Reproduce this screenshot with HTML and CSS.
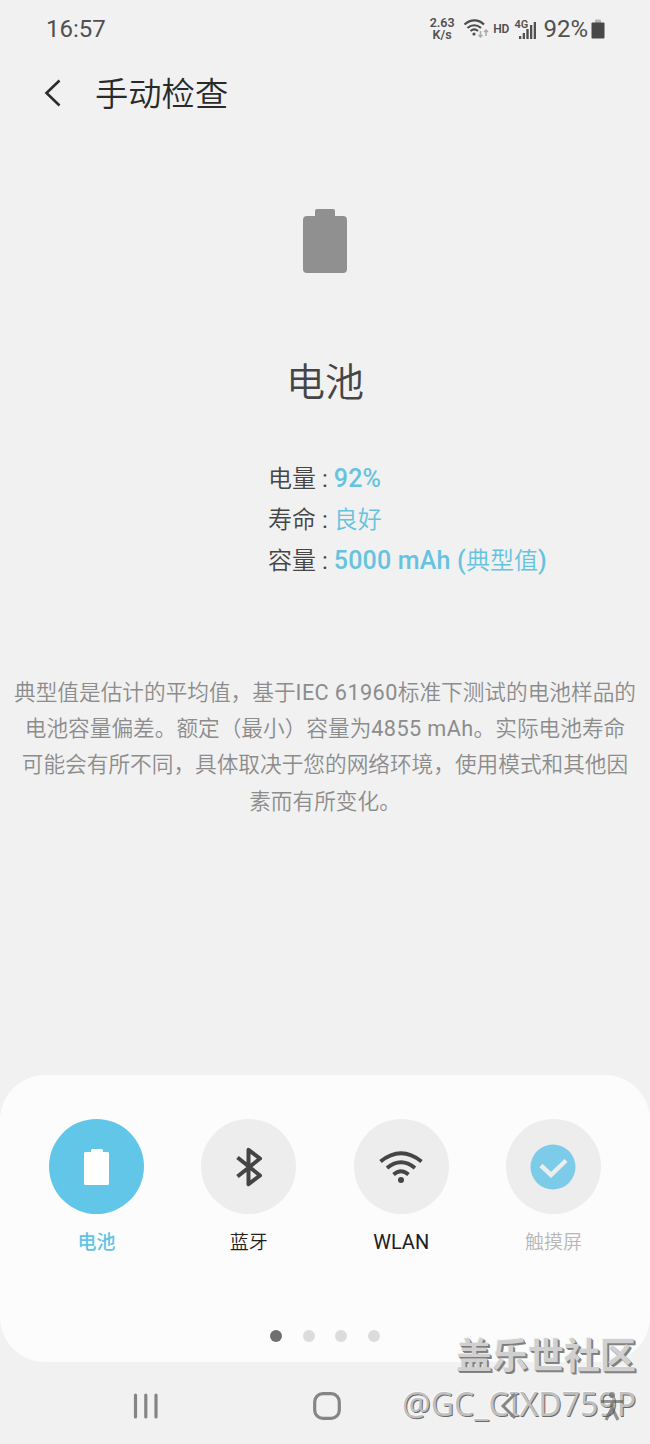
FILE: index.html
```html
<!DOCTYPE html>
<html lang="zh-CN">

<head>
    <meta charset="UTF-8">
    <meta name="viewport" content="width=device-width, initial-scale=1.0">
    <title>手动检查</title>
    <link rel="stylesheet" href="styles.css">
</head>

<body>
    <div class="screen">
        <div class="status-bar">
            <span class="time">16:57</span>
            <div class="status-icons">
                <div class="net-speed">2.63<br>K/s</div>
                <svg class="status-wifi" width="26" height="22" viewBox="0 0 26 22" fill="none">
                    <path d="M1.500 6.500C7.500 1 15.500 1 21 6.500M4.500 10c4-3.700 9.500-3.700 13.500 0M7.500 13c2.400-2 5.200-2 7.500 0" stroke="#4c4c4c" stroke-width="2.200" />
                    <circle cx="11" cy="16" r="1.600" fill="#4c4c4c" />
                    <path d="M17.500 13v6M15.500 17l2 2 2-2M23 18v-6M21 14l2-2 2 2" stroke="#ababab" stroke-width="1.500" />
                </svg>
                <span class="hd">HD</span>
                <div class="signal">
                    <span>4G</span>
                    <svg width="18" height="18" viewBox="0 0 18 18">
                        <path d="M0 15h2.300v3H0zM3.700 12H6v6H3.700zM7.300 8h2.400v10H7.300zM11 4h2.300v14H11zM14.700 1H17v17h-2.300z" fill="#505050" />
                    </svg>
                </div>
                <span class="percent">92%</span>
                <svg class="status-battery" width="14" height="20" viewBox="0 0 14 20">
                    <path d="M4 1.500Q4 .5 5 .5h4q1 0 1 1V4H4z" fill="#b5b5b5" />
                    <rect x="0.500" y="3.500" width="13" height="16" rx="1" fill="#484848" />
                </svg>
            </div>
        </div>

        <div class="header">
            <svg width="20" height="30" viewBox="0 0 20 30" fill="none">
                <path d="M16.500 2.500L3.500 15l13 12.500" stroke="#2c2c2c" stroke-width="2.600" />
            </svg>
            <h1>手动检查</h1>
        </div>

        <div class="content">
            <svg class="battery" width="44" height="64" viewBox="0 0 44 64">
                <path d="M12 7V2q0-2 2-2h16q2 0 2 2v5h8q4 0 4 4v49q0 4-4 4H4q-4 0-4-4V11q0-4 4-4z" fill="#909090" />
            </svg>
            <h2>电池</h2>
            <div class="details">
                <div>电量 : <b>92%</b></div>
                <div>寿命 : <span class="value">良好</span></div>
                <div>容量 : <b>5000 mAh (</b><span class="value">典型值</span><b>)</b></div>
            </div>
            <p class="description">
                典型值是估计的平均值，基于<span>IEC 61960</span>标准下测试的电池样品的<br>
                电池容量偏差。额定（最小）容量为<span>4855 mAh</span>。实际电池寿命<br>
                可能会有所不同，具体取决于您的网络环境，使用模式和其他因<br>
                素而有所变化。
            </p>
        </div>

        <div class="card">
            <div class="items">
                <div class="item active">
                    <div class="circle">
                        <svg width="26" height="38" viewBox="0 0 26 38">
                            <path d="M7 4V2.500Q7 1 8.500 1h9Q19 1 19 2.500V4h4.500q1.500 0 1.500 1.500v30q0 1.500-1.500 1.500h-22Q0 37 0 35.500v-30Q0 4 1.500 4z" fill="#fff" />
                        </svg>
                    </div>
                    <span>电池</span>
                </div>
                <div class="item">
                    <div class="circle">
                        <svg width="28" height="40" viewBox="0 0 28 40" fill="none" stroke="#454545" stroke-width="4" stroke-linejoin="round">
                            <path d="M2.500 10.500L25 28.500 13.500 37.200V2.800L25 11.500 2.500 29.500" />
                        </svg>
                    </div>
                    <span>蓝牙</span>
                </div>
                <div class="item">
                    <div class="circle">
                        <svg width="44" height="34" viewBox="0 0 44 34" fill="none">
                            <path d="M1.500 11.500Q22-5 42.500 11.500M8 18q14-11.500 28 0M14.500 24.500q7.500-6.500 15 0" stroke="#454545" stroke-width="3.800" />
                            <circle cx="22" cy="30" r="3" fill="#454545" />
                        </svg>
                    </div>
                    <span class="wlan">WLAN</span>
                </div>
                <div class="item disabled">
                    <div class="circle">
                        <svg width="46" height="46" viewBox="0 0 46 46" fill="none">
                            <circle cx="23" cy="23" r="22.500" fill="#7ccbe9" />
                            <path d="M11 21.500l10 9.500L36 16.500" stroke="#ededed" stroke-width="4.500" />
                        </svg>
                    </div>
                    <span>触摸屏</span>
                </div>
            </div>
            <div class="dots">
                <i class="current"></i><i></i><i></i><i></i>
            </div>
        </div>

        <div class="nav-bar">
            <svg class="recents" width="26" height="28" viewBox="0 0 26 28" stroke="#858585" stroke-width="3.200" stroke-linecap="round">
                <path d="M2.500 3v22M12.800 3v22M23 3v22" />
            </svg>
            <svg class="home" width="28" height="28" viewBox="0 0 28 28" fill="none">
                <rect x="1.700" y="1.700" width="24.600" height="24.600" rx="8" stroke="#858585" stroke-width="3.200" />
            </svg>
            <svg class="back" width="18" height="28" viewBox="0 0 18 28" fill="none">
                <path d="M15 2L3 14l12 12" stroke="#858585" stroke-width="3" />
            </svg>
            <svg class="assist" width="26" height="30" viewBox="0 0 26 30" fill="none">
                <circle cx="13" cy="4" r="3" fill="#555" />
                <path d="M2 10.500h22M13 10v8M13 17L7 29M13 17l6 12" stroke="#555" stroke-width="3.200" />
            </svg>
        </div>

        <div class="watermark">
            <div class="community">盖乐世社区</div>
            <div class="user">@GC_CIXD759P</div>
        </div>
    </div>
</body>

</html>
```

FILE: styles.css
```css
* {
    box-sizing: border-box;
}

body {
    margin: 0;
    background: #f1f1f1;
    color: #454545;
    font-family: Roboto, "Noto Sans CJK SC DemiLight", "Noto Sans CJK SC", sans-serif;
}

svg {
    display: block;
    flex-shrink: 0;
}

.screen {
    position: relative;
    display: flex;
    flex-direction: column;
    width: 650px;
    height: 1444px;
    overflow: hidden;
}

.status-bar {
    display: flex;
    align-items: center;
    justify-content: space-between;
    height: 57px;
    padding: 0 45px 0 46px;
    color: #505050;
    font-size: 24px;
}

.status-icons {
    display: flex;
    align-items: center;
}

.net-speed {
    width: 26px;
    margin-right: 8px;
    font-size: 12.500px;
    font-weight: 600;
    line-height: 12px;
    text-align: center;
}

.hd {
    margin: 0 5px 0 4px;
    font-size: 12px;
    font-weight: 600;
}

.signal {
    display: flex;
    align-items: flex-end;
    height: 20px;
    margin-right: 6px;
}

.signal span {
    align-self: flex-start;
    width: 5px;
    font-size: 11px;
    font-weight: 600;
    line-height: 11px;
}

.percent {
    margin-right: 3px;
}

.header {
    display: flex;
    align-items: center;
    height: 72px;
    padding-left: 43px;
}

.header h1 {
    margin: 4px 0 0 32px;
    color: #2a2a2a;
    font-size: 33.300px;
    font-weight: 400;
    line-height: 48px;
}

.content {
    display: flex;
    flex-direction: column;
    align-items: center;
    height: 946px;
    padding-top: 80px;
}

.content h2 {
    margin: 81px 0 0;
    font-size: 39px;
    font-weight: 400;
    line-height: 58px;
}

.details {
    align-self: flex-start;
    margin: 47px 0 0 268px;
    font-size: 24px;
    line-height: 41px;
}

.details b,
.value {
    color: #66c3e0;
}

.details b {
    font-size: 25px;
    font-weight: 500;
    letter-spacing: 0.200px;
    line-height: 1;
}

.description {
    margin: 93px 0 0;
    color: #8c8c8c;
    font-size: 21.670px;
    line-height: 36.200px;
    text-align: center;
    white-space: nowrap;
}

.description span {
    letter-spacing: 0.400px;
}

.card {
    height: 287px;
    padding-top: 44px;
    border-radius: 45px;
    background: #fcfcfc;
}

.items {
    display: flex;
    justify-content: space-between;
    padding: 0 49px;
}

.item {
    display: flex;
    flex-direction: column;
    align-items: center;
    width: 95px;
    color: #202020;
    font-size: 19px;
    line-height: 28px;
}

.circle {
    display: flex;
    align-items: center;
    justify-content: center;
    width: 95px;
    height: 95px;
    margin-bottom: 15px;
    border-radius: 50%;
    background: #ededed;
}

.wlan {
    font-size: 20px;
    line-height: 26px;
}

.active {
    color: #61c3e5;
    font-family: Roboto, "Noto Sans CJK SC", sans-serif;
    font-weight: 500;
}

.active .circle {
    background: #62c6e9;
}

.disabled {
    color: #b8b8b8;
}

.dots {
    display: flex;
    justify-content: center;
    gap: 20.500px;
    margin-top: 73px;
}

.dots i {
    width: 12px;
    height: 12px;
    border-radius: 50%;
    background: #dcdcdc;
}

.dots .current {
    background: #707070;
}

.nav-bar {
    position: relative;
    z-index: 1;
    display: flex;
    align-items: center;
    height: 82px;
    padding: 5px 0 0 133px;
}

.recents {
    margin-right: 154px;
}

.home {
    margin-right: 159px;
}

.back {
    margin-right: 81px;
}

.assist {
    opacity: 0.600;
}

/* community stamp laid over the bottom corner */
.watermark {
    position: absolute;
    right: 14px;
    bottom: 18px;
    color: #d0d0d0;
    text-align: right;
}

.community {
    font-family: Roboto, "Noto Sans CJK SC", sans-serif;
    font-size: 36px;
    font-weight: 700;
    line-height: 50px;
    text-shadow: 1px 1px 0 #7c7c7c, 2px 2px 0 #868686, -1px -1px 0 #f6f6f6;
}

.user {
    color: #c0c0c0;
    font-family: "Noto Sans", sans-serif;
    font-size: 32px;
    line-height: 44px;
    text-shadow: 1px 1px 0 #6a6a6a, -1px -1px 0 #fafafa;
}
```
